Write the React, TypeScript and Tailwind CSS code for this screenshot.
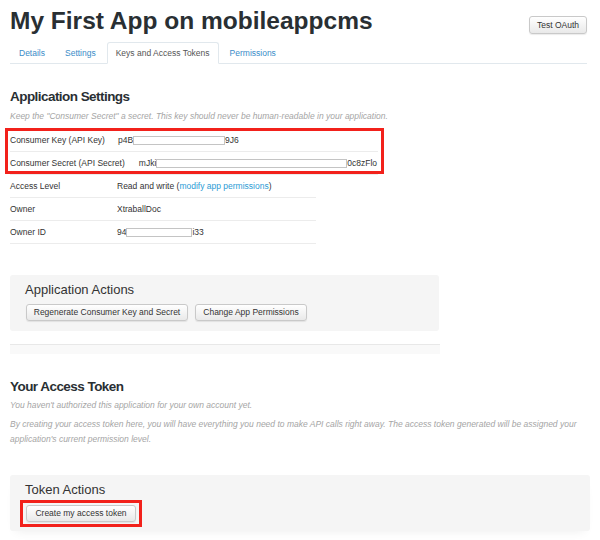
import React from "react";

const body = "font-['Liberation_Sans','Helvetica_Neue',Arial,sans-serif]";
const heading = "text-[13.5px] leading-[17px] font-bold tracking-[-0.55px] text-[#292f33]";

const Btn = ({ children, className = "" }: { children: React.ReactNode; className?: string }) => (
  <button
    className={`h-[17px] px-[6px] rounded-[3px] border border-[#c9c9c9] bg-gradient-to-b from-white to-[#e9e9e9] text-[8.5px] leading-none text-[#333] shadow-[0_1px_1px_rgba(0,0,0,0.08)] ${className}`}
  >
    {children}
  </button>
);

const Masked = ({ w }: { w: number }) => (
  <span
    className="inline-block h-[9px] bg-white border border-[#c4c4c4] align-middle"
    style={{ width: w }}
  />
);

const tabs = ["Details", "Settings", "Keys and Access Tokens", "Permissions"];

export default function App() {
  return (
    <div className={`w-[600px] h-[540px] overflow-hidden bg-white text-[#333] ${body}`}>
      {/* header */}
      <div className="flex items-start justify-between pl-[10px] pr-[13px]">
        <h1 className="mt-[7px] text-[24.5px] leading-[28px] font-bold text-[#292f33]">
          My First App on mobileappcms
        </h1>
        <Btn className="mt-[16px] h-[18px] w-[58px] px-0">Test OAuth</Btn>
      </div>

      {/* tabs */}
      <ul className="mt-[7px] ml-[10px] mr-[13px] flex border-b border-[#e1e8ed] text-[8.5px]">
        {tabs.map((t) => {
          const active = t === "Keys and Access Tokens";
          return (
            <li
              key={t}
              className={`mr-[2px] -mb-px h-[22px] flex items-center px-[8px] border rounded-t-[3px] ${
                active
                  ? "border-[#e1e8ed] border-b-white bg-white text-[#555]"
                  : "border-transparent text-[#3a8cc8]"
              }`}
            >
              {t}
            </li>
          );
        })}
      </ul>

      <div className="px-[10px]">
        {/* Application Settings */}
        <h2 className={`mt-[24px] ${heading}`}>Application Settings</h2>
        <p className="mt-[5px] text-[8.5px] leading-[12px] italic text-[#a5a5a5]">
          Keep the "Consumer Secret" a secret. This key should never be human-readable in your
          application.
        </p>

        <div className="relative mt-[7px] text-[8.5px]">
          <div className="w-[368px]">
            <div className="h-[23px] flex items-center gap-[13px] border-b border-[#ececec]">
              <span>Consumer Key (API Key)</span>
              <span className="flex items-center">
                p4B
                <Masked w={92} />
                9J6
              </span>
            </div>
            <div className="h-[23px] flex items-center gap-[14px] border-b border-[#ececec]">
              <span>Consumer Secret (API Secret)</span>
              <span className="flex items-center">
                mJki
                <Masked w={191} />
                0c8zFlo
              </span>
            </div>
          </div>
          <div className="w-[306px]">
            <div className="h-[23px] grid grid-cols-[107px_1fr] items-center border-b border-[#ececec]">
              <span>Access Level</span>
              <span>
                Read and write (<span className="text-[#2b9bd5]">modify app permissions</span>)
              </span>
            </div>
            <div className="h-[23px] grid grid-cols-[107px_1fr] items-center border-b border-[#ececec]">
              <span>Owner</span>
              <span>XtraballDoc</span>
            </div>
            <div className="h-[23px] grid grid-cols-[107px_1fr] items-center border-b border-[#ececec]">
              <span>Owner ID</span>
              <span className="flex items-center">
                94
                <Masked w={66} />
                i33
              </span>
            </div>
          </div>
          {/* annotation */}
          <div className="absolute left-[-5px] top-[-1px] w-[379px] h-[46px] border-[3px] border-[#f2211b]" />
        </div>

        {/* Application Actions */}
        <div className="mt-[31px] w-[429px] h-[56px] rounded-[3px] bg-[#f5f5f5] pl-[15px] pt-[6px]">
          <h3 className="text-[13px] leading-[17px] text-[#333]">Application Actions</h3>
          <div className="mt-[6px] flex gap-[7px] ml-[1px]">
            <Btn className="w-[162px] h-[17px]">Regenerate Consumer Key and Secret</Btn>
            <Btn className="w-[112px] h-[17px]">Change App Permissions</Btn>
          </div>
        </div>

        <div className="mt-[13px] w-[430px] h-[10px] border-t border-[#e8e8e8] bg-[#f9f9f9]" />

        {/* Your Access Token */}
        <h2 className={`mt-[24px] ${heading}`}>Your Access Token</h2>
        <p className="mt-[4px] text-[8.5px] leading-[12px] italic text-[#a5a5a5]">
          You haven't authorized this application for your own account yet.
        </p>
        <p className="mt-[6px] text-[8.5px] leading-[15px] italic text-[#a5a5a5] pr-[2px]">
          By creating your access token here, you will have everything you need to make API calls
          right away. The access token generated will be assigned your application's current
          permission level.
        </p>

        {/* Token Actions */}
        <div className="mt-[28px] w-[580px] h-[56px] rounded-[3px] bg-[#f5f5f5] pl-[10px] pt-[6px] shadow-[0_6px_10px_-6px_rgba(0,0,0,0.08)]">
          <h3 className="pl-[5px] text-[13px] leading-[17px] text-[#333]">Token Actions</h3>
          <div className="mt-[2px] inline-flex px-[3px] py-[2px] border-[3px] border-[#f2211b]">
            <Btn className="w-[110px] h-[17px]">Create my access token</Btn>
          </div>
        </div>
      </div>
    </div>
  );
}
